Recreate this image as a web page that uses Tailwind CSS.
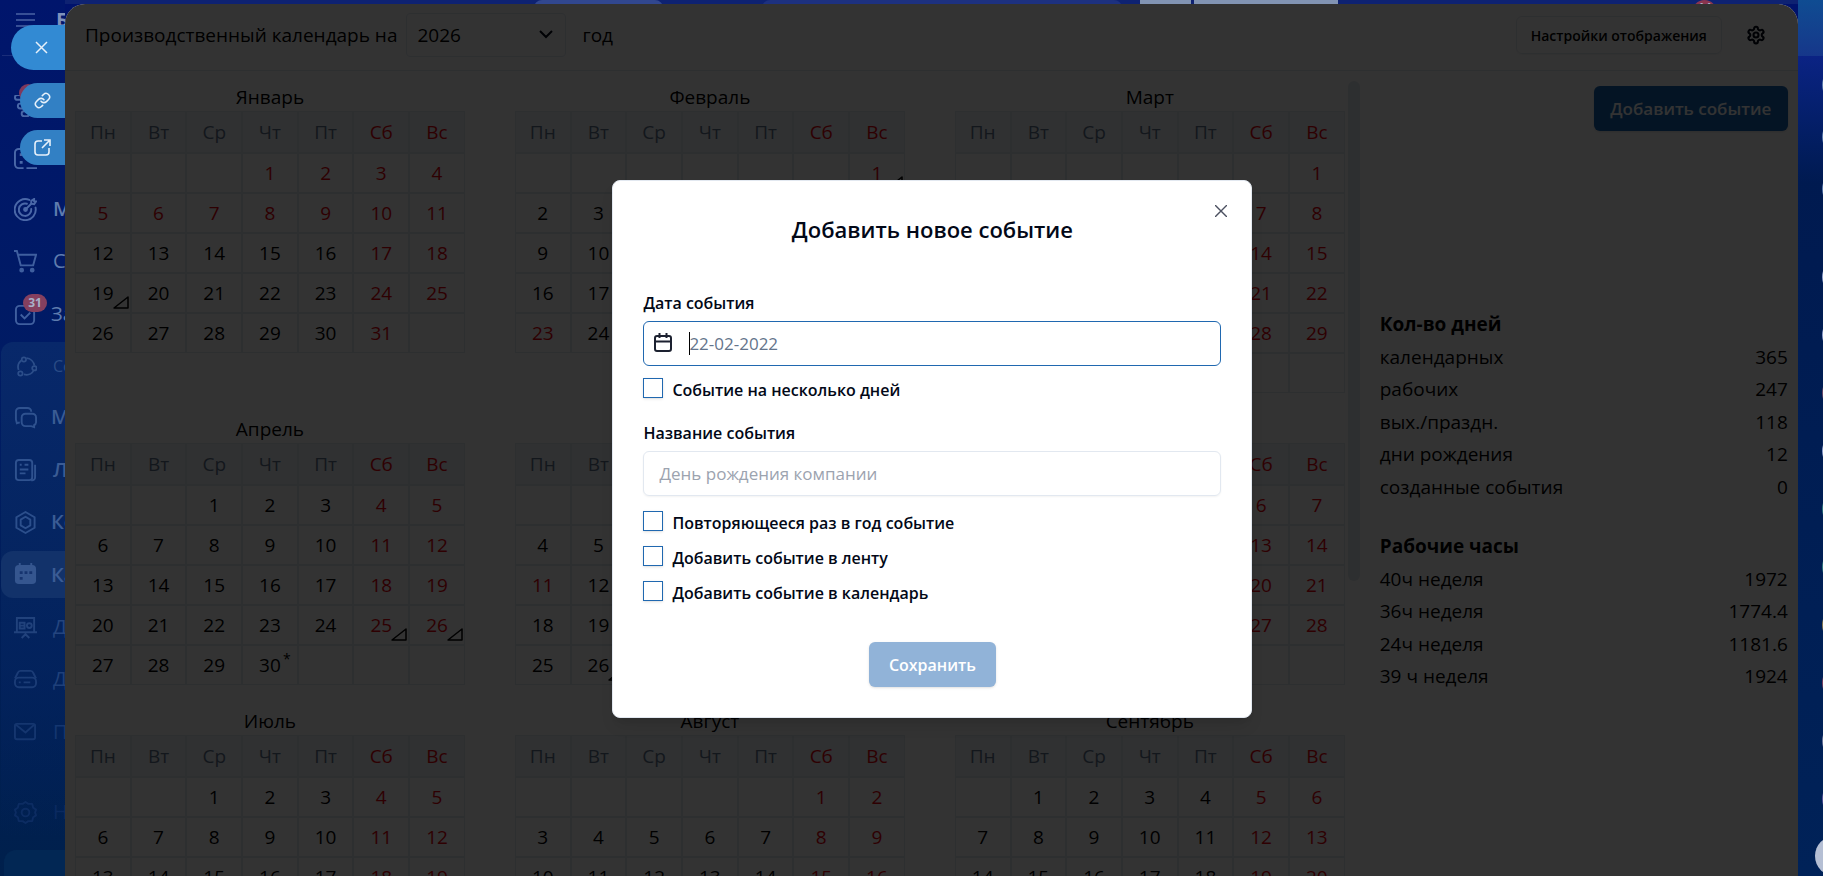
<!DOCTYPE html>
<html lang="ru">

<head>
    <meta charset="UTF-8" />
    <meta name="viewport" content="width=device-width, initial-scale=1.0" />
    <title>Производственный календарь</title>
    <script src="https://cdn.jsdelivr.net/npm/@tailwindcss/browser@4"></script>
    <style>
        body {
            font-family: 'Segoe UI', 'Open Sans', 'Noto Sans', sans-serif;
        }
    </style>
</head>

<body class="relative flex h-screen overflow-hidden bg-linear-to-b from-[#00126c] via-[#001a5c] to-[#00204c] text-black">

    <!-- portal menu, mostly covered by the slider -->
    <aside class="w-[65px] shrink-0 overflow-hidden bg-linear-to-b from-[#00156c] via-[#001c62] via-50% to-[#00204c] text-[20px] text-[#5f7cae]">
        <div class="ml-0.5 flex h-14 items-start gap-5 border-b border-white/10 pt-2 pl-3.5">
            <svg class="mt-1 size-5 shrink-0" viewBox="0 0 20 20" fill="none" stroke="#4a63a4" stroke-width="1.700"><path d="M0 2h19M0 8h19M0 14h19" /></svg>
            <b class="leading-6 text-[#7f92bb]">Битрикс24</b>
        </div>
        <nav class="whitespace-nowrap">
            <a href="#" class="relative mt-6 flex h-[52px] items-center gap-4 pl-3.5">
                <svg class="size-[23px] shrink-0" viewBox="0 0 24 24" fill="none" stroke="#4a68a8" stroke-width="2"><rect x="1" y="0" width="20" height="5" rx="2.500" /><rect x="4" y="9" width="14" height="5" rx="2.500" /><rect x="8" y="17" width="8" height="5" rx="2.500" /></svg>
                <span class="absolute top-1 left-[19px] size-[18px] rounded-full bg-[#80385c]"></span>
            </a>
            <a href="#" class="flex h-[52px] items-center gap-4 pl-3.5">
                <svg class="size-[23px] shrink-0" viewBox="0 0 24 24" fill="none" stroke="#4a68a8" stroke-width="2"><path d="M10 22H5a4 4 0 0 1-4-4V6a4 4 0 0 1 4-4h14M13 22h11" /><path d="M6 8h3M6 16h3" stroke-width="3" /></svg>
            </a>
            <a href="#" class="flex h-[50px] items-center gap-4 pl-3.5 font-semibold">
                <svg class="size-[23px] shrink-0" viewBox="0 0 24 24" fill="none" stroke="#4a68a8" stroke-width="2" stroke-linecap="round"><path d="M16 2A11 11 0 1 0 22.500 10" /><path d="M13.500 6A6.500 6.500 0 1 0 18 11.500" /><path d="M12 12l6-6" /><path d="M18 6V3l3-2v2.500h2l-2 3z" /><circle cx="12" cy="12" r="1.500" fill="#4a68a8" /></svg>
                Маркетинг
            </a>
            <a href="#" class="flex h-[54px] items-center gap-4 pl-3.5">
                <svg class="size-[23px] shrink-0" viewBox="0 0 24 24" fill="none" stroke="#3f5f9f" stroke-width="2"><path d="M0 1h3l4 15h13l3-11H4" /><circle cx="8" cy="21" r="1.500" fill="#3f5f9f" /><circle cx="19" cy="21" r="1.500" fill="#3f5f9f" /></svg>
                CRM
            </a>
            <a href="#" class="relative flex h-[52px] items-center gap-3.5 pl-3.5">
                <svg class="size-[23px] shrink-0" viewBox="0 0 24 24" fill="none" stroke="#3f5f9f" stroke-width="2"><rect x="2" y="3" width="19" height="19" rx="4" /><path d="M7 12l4 4 6-6" /></svg>
                Задачи
                <span class="absolute top-1.5 left-[23px] flex h-[18px] w-6 items-center justify-center rounded-full bg-[#85405f] text-xs font-bold text-[#a8b0c8]">31</span>
            </a>
            <div class="mt-0.5 ml-px rounded-l-xl bg-linear-to-b from-[#08286a] via-[#04245f] via-50% to-transparent text-[#3b5c94]">
                <a href="#" class="flex h-[48px] items-center gap-4 pl-[15px] text-base text-[#2a4b85]">
                    <svg class="size-[21px] shrink-0" viewBox="0 0 24 24" fill="none" stroke="#2c4e8a" stroke-width="2"><path d="M3 16A10 10 0 0 1 6 5M12 2.500A10 10 0 0 1 21 11M20 17A10 10 0 0 1 9 21" /><circle cx="9" cy="4" r="2.500" /><circle cx="21" cy="14" r="2.500" /><circle cx="5" cy="20" r="2.500" /></svg>
                    Соцсеть
                </a>
                <a href="#" class="flex h-[54px] items-center gap-3.5 pl-[13px] font-semibold">
                    <svg class="size-[23px] shrink-0" viewBox="0 0 24 24" fill="none" stroke="#2f528f" stroke-width="2"><path d="M6 17l-3 1-1-4V6a4 4 0 0 1 4-4h8a4 4 0 0 1 4 4" /><path d="M12 8h7a4 4 0 0 1 4 4v5a4 4 0 0 1-2 3v2l-3-1h-6a4 4 0 0 1-4-4v-5a4 4 0 0 1 4-4z" /></svg>
                    Мессенджер
                </a>
                <a href="#" class="flex h-[52px] items-center gap-4 pl-[13px] font-semibold">
                    <svg class="size-[23px] shrink-0" viewBox="0 0 24 24" fill="none" stroke="#2f528f" stroke-width="2"><rect x="2" y="1" width="17" height="21" rx="3" /><path d="M22 6v13a3 3 0 0 1-4 3M6 6h2M11 6h4M6 11h9M6 15h6" /></svg>
                    Лента
                </a>
                <a href="#" class="flex h-[52px] items-center gap-3.5 pl-[13px] font-semibold">
                    <svg class="size-[23px] shrink-0" viewBox="0 0 24 24" fill="none" stroke="#2c4f8c" stroke-width="2" stroke-linejoin="round"><path d="M12 1l9.500 5.500v11L12 23l-9.500-5.500v-11z" /><path d="M12 6l5 3v6l-5 3-5-3V9z" /></svg>
                    Коллабы
                </a>
                <a href="#" class="mt-[3px] flex h-[47px] items-center gap-3.5 rounded-l-xl bg-[#12326a] pl-[13px] font-semibold">
                    <svg class="size-[23px] shrink-0" viewBox="0 0 24 24" fill="#35568f"><path d="M6 0v3M18 0v3" stroke="#35568f" stroke-width="2" /><rect x="1" y="2" width="22" height="20" rx="4" /><path d="M6 10h3M11 10h3M16 10h3M6 16h3" stroke="#16346f" stroke-width="3" /></svg>
                    Календарь
                </a>
                <a href="#" class="mt-[3px] flex h-[52px] items-center gap-4 pl-[13px] text-[#24457f]">
                    <svg class="size-[23px] shrink-0" viewBox="0 0 24 24" fill="none" stroke="#21427c" stroke-width="2"><path d="M0 17h24M3 17V2h18v15M8 23l4-4 4 4M6 7h5v6H6zM6 10h5" /><circle cx="16" cy="10" r="2.500" /></svg>
                    Доски
                </a>
                <a href="#" class="flex h-[52px] items-center gap-4 pl-[13px] text-[#1f407a]">
                    <svg class="size-[23px] shrink-0" viewBox="0 0 24 24" fill="none" stroke="#1b3c76" stroke-width="2"><path d="M1 11l3-6a3 3 0 0 1 3-2h10a3 3 0 0 1 3 2l3 6" /><rect x="1" y="10" width="22" height="10" rx="4" /><path d="M5 15h2M10 15h7" /></svg>
                    Диск
                </a>
                <a href="#" class="flex h-[53px] items-center gap-4 pl-[13px] text-[#153670]">
                    <svg class="size-[23px] shrink-0" viewBox="0 0 24 24" fill="none" stroke="#15366f" stroke-width="2"><rect x="1" y="4" width="21" height="16" rx="2" /><path d="M2 5l10 8L21 5" /></svg>
                    Почта
                </a>
                <a href="#" class="mt-7 flex h-[52px] items-center gap-4 pl-[13px] text-[#0b2a60]">
                    <svg class="size-[23px] shrink-0" viewBox="0 0 24 24" fill="none" stroke="#0c2c62" stroke-width="2" stroke-linejoin="round"><path d="M12 1l3 2 4 0 1 4 3 2-1 3 1 3-3 2-1 4-4 0-3 2-3-2-4 0-1-4-3-2 1-3-1-3 3-2 1-4 4 0z" /><circle cx="12" cy="12" r="4" /></svg>
                    Настройки
                </a>
            </div>
            <div class="mt-3 ml-1 h-12 rounded-l-xl bg-[#022754]"></div>
        </nav>
    </aside>

    <!-- strip of the portal header above the slider -->
    <div class="absolute top-0 right-0 left-[65px] h-1 overflow-hidden bg-[#0e2272]">
        <span class="absolute top-0 left-[469px] h-6 w-[129px] rounded-t-lg bg-[#31478f]"></span>
        <span class="absolute top-0 left-[697px] h-6 w-[360px] rounded-t-lg bg-[#1d3180]"></span>
        <span class="absolute top-0 left-[1075px] h-6 w-[51px] bg-[#8294b3]"></span>
        <span class="absolute top-0 left-[1129px] h-6 w-[144px] bg-[#8294b3]"></span>
        <span class="absolute top-0 left-[1627px] h-4 w-[25px] rounded-t-full bg-[#8a3550] text-center text-xs leading-4 font-bold text-[#a8b0c8]">14</span>
    </div>

    <main class="relative mt-1 flex min-w-0 grow flex-col overflow-hidden rounded-t-[20px] bg-white">
        <header class="flex h-[67px] shrink-0 items-center border-b border-slate-200 pr-8 pb-1 pl-5 text-[19px]">
            <label for="year">Производственный календарь на</label>
            <div class="relative mr-4 ml-[9px] h-11 w-40">
                <select id="year" class="size-full appearance-none rounded-sm border border-slate-200 pl-[10px]">
                    <option>2026</option>
                </select>
                <svg class="pointer-events-none absolute top-4 right-3 h-3 w-4" viewBox="0 0 16 12" fill="none" stroke="#020817" stroke-width="2"><path d="M2 2l6 6 6-6" /></svg>
            </div>
            <span>год</span>
            <button class="ml-auto h-[38px] w-[206px] rounded-md border border-slate-200 text-[14px] font-semibold whitespace-nowrap shadow-xs">Настройки отображения</button>
            <button class="ml-6 size-5" aria-label="Настройки">
                <svg class="size-5" viewBox="0 0 24 24" fill="none" stroke="#020817" stroke-width="2.500" stroke-linejoin="round"><path d="M12.220 2h-.440a2 2 0 0 0-2 2v.180a2 2 0 0 1-1 1.730l-.430.250a2 2 0 0 1-2 0l-.150-.080a2 2 0 0 0-2.730.730l-.220.380a2 2 0 0 0 .730 2.730l.150.100a2 2 0 0 1 1 1.720v.510a2 2 0 0 1-1 1.740l-.150.090a2 2 0 0 0-.730 2.730l.220.380a2 2 0 0 0 2.730.730l.150-.080a2 2 0 0 1 2 0l.430.250a2 2 0 0 1 1 1.730V20a2 2 0 0 0 2 2h.440a2 2 0 0 0 2-2v-.180a2 2 0 0 1 1-1.730l.430-.250a2 2 0 0 1 2 0l.150.080a2 2 0 0 0 2.730-.730l.220-.390a2 2 0 0 0-.730-2.730l-.150-.080a2 2 0 0 1-1-1.740v-.500a2 2 0 0 1 1-1.740l.150-.090a2 2 0 0 0 .730-2.730l-.220-.380a2 2 0 0 0-2.730-.730l-.150.080a2 2 0 0 1-2 0l-.430-.250a2 2 0 0 1-1-1.730V4a2 2 0 0 0-2-2z" /><circle cx="12" cy="12" r="3" /></svg>
            </button>
        </header>

        <div class="flex min-h-0 grow pr-[10px] pl-[10px]">
            <div id="months" class="grid min-w-0 grow grid-cols-3 content-start gap-x-[50px] gap-y-[22px] overflow-hidden pt-3 text-[19px]"></div>
            <div class="mt-[10px] mr-5 ml-[3px] h-[500px] w-3 shrink-0 rounded-full bg-slate-200"></div>

            <section class="w-[408px] shrink-0 pt-[15px] text-[19px]">
                <div class="flex justify-end">
                    <button class="h-[45px] w-[194px] rounded-md bg-[#1464b4] text-[17px] font-semibold whitespace-nowrap text-white shadow-sm">Добавить событие</button>
                </div>
                <table class="mt-[177px] h-[195px] w-full">
                    <tbody>
                        <tr><th colspan="2" class="text-left font-bold">Кол-во дней</th></tr>
                        <tr><td>календарных</td><td class="text-right">365</td></tr>
                        <tr><td>рабочих</td><td class="text-right">247</td></tr>
                        <tr><td>вых./праздн.</td><td class="text-right">118</td></tr>
                        <tr><td>дни рождения</td><td class="text-right">12</td></tr>
                        <tr><td>созданные события</td><td class="text-right">0</td></tr>
                    </tbody>
                </table>
                <table class="mt-[27px] h-[163px] w-full">
                    <tbody>
                        <tr><th colspan="2" class="text-left font-bold">Рабочие часы</th></tr>
                        <tr><td>40ч неделя</td><td class="text-right">1972</td></tr>
                        <tr><td>36ч неделя</td><td class="text-right">1774.4</td></tr>
                        <tr><td>24ч неделя</td><td class="text-right">1181.6</td></tr>
                        <tr><td>39 ч неделя</td><td class="text-right">1924</td></tr>
                    </tbody>
                </table>
            </section>
        </div>

        <!-- modal -->
        <div class="absolute inset-0 flex items-start justify-center bg-black/80 pt-44 pl-0.5">
            <form class="relative flex w-[640px] flex-col rounded-lg border border-slate-200 bg-white px-[30px] pt-8 pb-[30px] text-[17px] text-[#020817] shadow-lg" role="dialog" aria-labelledby="dialog-title" onsubmit="event.preventDefault()">
                <button type="button" aria-label="Закрыть" class="absolute top-6 right-6 size-3">
                    <svg class="size-3" viewBox="0 0 12 12" fill="none" stroke="#4b5060" stroke-width="1.400"><path d="M0 0l12 12M12 0L0 12" /></svg>
                </button>
                <h2 id="dialog-title" class="text-center text-[22px] leading-8 font-semibold">Добавить новое событие</h2>

                <label for="date" class="mt-[46px] text-[16px] leading-6 font-semibold">Дата события</label>
                <div class="relative mt-[6px]">
                    <input id="date" type="text" placeholder="22-02-2022" class="h-[45px] w-full rounded-md border border-[#2068b0] pl-[45px] placeholder:text-[#64748b] outline-none" />
                    <svg class="pointer-events-none absolute top-3 left-[10px] size-5" viewBox="0 0 20 20" fill="none" stroke="#1c2130" stroke-width="2"><rect x="2" y="3" width="16" height="15" rx="2" /><path d="M2 8.500h16M6.500 0v5M13.500 0v5" /></svg>
                    <span class="pointer-events-none absolute top-[11px] left-[46px] h-[23px] w-px bg-black"></span>
                </div>
                <div class="mt-3 flex h-6 items-start gap-[9px]">
                    <input id="several" type="checkbox" class="size-5 appearance-none border border-[#2068b0] shadow-sm checked:bg-[#2068b0]" />
                    <label for="several" class="text-[16px] leading-6 font-semibold">Событие на несколько дней</label>
                </div>

                <label for="name" class="mt-[19px] text-[16px] leading-6 font-semibold">Название события</label>
                <input id="name" type="text" placeholder="День рождения компании" class="mt-[6px] h-[45px] w-full rounded-md border border-slate-200 px-[15px] shadow-xs placeholder:text-[#9ca3af]" />

                <div class="mt-[15px] flex flex-col gap-[11px]">
                    <div class="flex h-6 items-start gap-[9px]">
                        <input id="yearly" type="checkbox" class="size-5 appearance-none border border-[#2068b0] shadow-sm checked:bg-[#2068b0]" />
                        <label for="yearly" class="text-[16px] leading-6 font-semibold">Повторяющееся раз в год событие</label>
                    </div>
                    <div class="flex h-6 items-start gap-[9px]">
                        <input id="feed" type="checkbox" class="size-5 appearance-none border border-[#2068b0] shadow-sm checked:bg-[#2068b0]" />
                        <label for="feed" class="text-[16px] leading-6 font-semibold">Добавить событие в ленту</label>
                    </div>
                    <div class="flex h-6 items-start gap-[9px]">
                        <input id="calendar" type="checkbox" class="size-5 appearance-none border border-[#2068b0] shadow-sm checked:bg-[#2068b0]" />
                        <label for="calendar" class="text-[16px] leading-6 font-semibold">Добавить событие в календарь</label>
                    </div>
                </div>

                <button type="submit" disabled class="mt-[37px] h-[45px] w-[127px] self-center rounded-md bg-[#91b3d8] text-[16px] font-semibold text-white shadow-sm">Сохранить</button>
            </form>
        </div>
    </main>

    <!-- contacts strip on the right -->
    <aside class="relative w-[25px] shrink-0 overflow-hidden bg-linear-to-b from-[#12489a] via-[#001a50] via-20% to-[#002258]">
        <div class="h-14 bg-linear-to-b from-[#0f4c92] to-[#16378a]"></div>
        <div class="h-32 bg-linear-to-b from-[#0b2384] to-[#001a50]"></div>
        <div class="absolute top-[67px] -right-[35px] flex flex-col gap-4">
            <span class="size-9 rounded-full bg-[#5d7cae]"></span>
            <span class="size-9 rounded-full bg-[#5d7cae]"></span>
            <span class="size-9 rounded-full bg-[#5d7cae]"></span>
        </div>
        <div class="absolute top-[259px] -right-[35px] flex flex-col gap-[22px]">
            <span class="size-9 rounded-full bg-[#8fa0cc]"></span>
            <span class="size-9 rounded-full bg-[#8fa0cc]"></span>
            <span class="size-9 rounded-full bg-[#6b4a68]"></span>
            <span class="size-9 rounded-full bg-[#8fa0cc]"></span>
            <span class="size-9 rounded-full bg-[#2f7a80]"></span>
            <span class="size-9 rounded-full bg-[#2f7a80]"></span>
            <span class="size-9 rounded-full bg-[#8a7a50]"></span>
            <span class="size-9 rounded-full bg-[#7a4060]"></span>
            <span class="size-9 rounded-full bg-[#6f789c]"></span>
            <span class="size-9 rounded-full bg-[#5a559c]"></span>
        </div>
        <span class="absolute -right-8 bottom-0 size-10 rounded-full bg-[#b5bfd4]"></span>
    </aside>

    <!-- slider labels -->
    <div class="absolute top-[25px] left-0 flex w-[65px] flex-col items-end">
        <button aria-label="Закрыть" class="flex h-[45px] w-[54px] items-center rounded-l-full bg-[#328ad3] pl-6">
            <svg class="size-[13px]" viewBox="0 0 13 13" fill="none" stroke="#e6f0fa" stroke-width="1.500"><path d="M1 1l11 11M12 1L1 12" /></svg>
        </button>
        <button aria-label="Скопировать ссылку" class="mt-[13px] flex h-[35px] w-[45px] items-center rounded-l-full bg-[#3280c4] pl-[14px]">
            <svg class="size-[17px]" viewBox="0 0 24 24" fill="none" stroke="#e6f0fa" stroke-width="2.200" stroke-linecap="round"><path d="M10 13a5 5 0 0 0 7.540.540l3-3a5 5 0 0 0-7.070-7.070l-1.720 1.710M14 11a5 5 0 0 0-7.540-.540l-3 3a5 5 0 0 0 7.070 7.070l1.710-1.710" /></svg>
        </button>
        <button aria-label="Открыть в новом окне" class="mt-3 flex h-[35px] w-[45px] items-center rounded-l-full bg-[#3280c4] pl-[14px]">
            <svg class="size-[17px]" viewBox="0 0 17 17" fill="none" stroke="#e6f0fa" stroke-width="1.600"><path d="M8 2H4a3 3 0 0 0-3 3v8a3 3 0 0 0 3 3h8a3 3 0 0 0 3-3V9M8 9l7-7M10 1h6v6" /></svg>
        </button>
    </div>

    <script>
        const year = 2026;
        const names = ["Январь", "Февраль", "Март", "Апрель", "Май", "Июнь", "Июль", "Август", "Сентябрь", "Октябрь", "Ноябрь", "Декабрь"];
        const weekdays = ["Пн", "Вт", "Ср", "Чт", "Пт", "Сб", "Вс"];
        const holidays = ["1-1", "1-2", "1-5", "1-6", "1-7", "1-8", "1-9", "2-23", "3-9", "5-1", "5-11", "6-12", "11-4", "12-31"];
        const birthdays = ["1-19", "2-1", "4-25", "4-26", "5-26"];
        const shortDays = ["4-30", "5-8", "6-11", "11-3"];
        const corner = '<svg class="absolute right-px bottom-[3px] h-[13px] w-4" viewBox="0 0 16 13" fill="none" stroke="#000" stroke-width="1.500" stroke-linejoin="round"><path d="M15 1v11H1z" /></svg>';

        function cell(month, day, column, total) {
            if (day < 1 || day > total) return '<td class="border border-slate-200"></td>';
            const key = month + "-" + day;
            const color = column > 4 || holidays.includes(key) ? "text-red-600" : "text-black";
            let extra = "";
            if (birthdays.includes(key)) extra += corner;
            if (shortDays.includes(key)) extra += '<span class="absolute top-[3px] right-[6px] text-[14px] leading-5">*</span>';
            return `<td class="relative border border-slate-200 ${color}">${day}${extra}</td>`;
        }

        document.getElementById("months").innerHTML = names.map((name, i) => {
            const offset = (new Date(year, i, 1).getDay() + 6) % 7;
            const total = new Date(year, i + 1, 0).getDate();
            let rows = "";
            for (let start = 1 - offset; start <= total; start += 7) {
                rows += '<tr class="h-10">' + weekdays.map((_, c) => cell(i + 1, start + c, c, total)).join("") + "</tr>";
            }
            const head = weekdays.map((w, c) =>
                `<th class="border border-slate-200 bg-slate-100 font-normal ${c > 4 ? "text-red-600" : "text-slate-500"}">${w}</th>`).join("");
            return `<table class="w-full table-fixed border-separate border-spacing-0 self-start text-center">
                <caption class="leading-7">${name}</caption>
                <thead><tr class="h-[42px]">${head}</tr></thead>
                <tbody>${rows}</tbody>
            </table>`;
        }).join("");
    </script>
</body>

</html>
